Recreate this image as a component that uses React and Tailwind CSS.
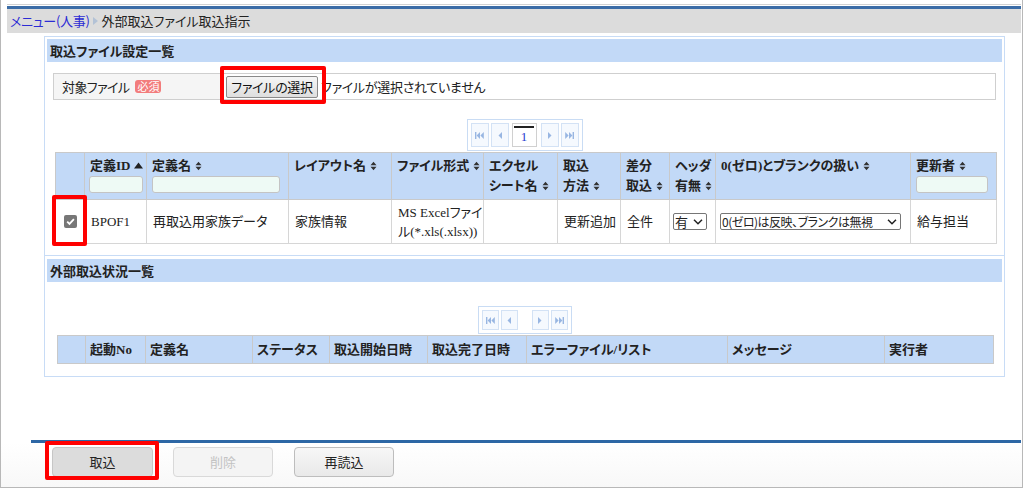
import React from "react";

const Sort = () => (
  <svg width="7" height="10" viewBox="0 0 7 10" className="inline-block ml-[4px] align-[-1px]">
    <path d="M0.5 4.2L3.5 0.8L6.5 4.2Z M0.5 5.8L6.5 5.8L3.5 9.2Z" fill="#333" />
  </svg>
);

const Up = () => (
  <svg width="9" height="7" viewBox="0 0 9 7" className="inline-block ml-[4px] align-[1px]">
    <path d="M0 6.5L4.5 0.5L9 6.5Z" fill="#222" />
  </svg>
);

const C = "#98b6e2";
const First = () => (
  <svg width="9" height="7" viewBox="0 0 9 7">
    <rect x="0" y="0" width="1.4" height="7" fill={C} />
    <path d="M5 0L1.6 3.5L5 7Z M8.8 0L5.4 3.5L8.8 7Z" fill={C} />
  </svg>
);
const Last = () => (
  <svg width="9" height="7" viewBox="0 0 9 7">
    <rect x="7.6" y="0" width="1.4" height="7" fill={C} />
    <path d="M0.2 0L3.6 3.5L0.2 7Z M4 0L7.4 3.5L4 7Z" fill={C} />
  </svg>
);
const Prev = () => (
  <svg width="4" height="7" viewBox="0 0 4 7">
    <path d="M4 0L0.5 3.5L4 7Z" fill={C} />
  </svg>
);
const Next = () => (
  <svg width="4" height="7" viewBox="0 0 4 7">
    <path d="M0 0L3.5 3.5L0 7Z" fill={C} />
  </svg>
);

const Chevron = () => (
  <svg width="10" height="6" viewBox="0 0 10 6" className="shrink-0">
    <path d="M1 0.8L5 4.8L9 0.8" stroke="#222" strokeWidth="1.5" fill="none" />
  </svg>
);

const TH1 = "bg-[#c2d9f7] border border-[#c9c9c9] align-top text-left font-bold pt-[3px] pl-[5px] leading-[20px] h-[47px]";
const TD1 = "border border-[#d6d6d6] align-middle pl-[6px] leading-[19px] h-[44px] bg-white font-normal";
const TH2 = "bg-[#c2d9f7] border border-[#c9c9c9] align-middle text-left font-bold pl-[4px] h-[28px] leading-[20px]";

export default function App() {
  return (
    <div className="relative w-[1023px] h-[488px] overflow-hidden bg-white border-l border-r border-b border-[#b8b8b8] flex flex-col font-['Noto_Sans_CJK_JP',sans-serif] [font-feature-settings:'palt'] text-[13px] text-[#222]">
      <div className="mt-[4px] ml-[6px] mr-[1px] h-px bg-[#d2d2d2]" />
      <div className="mt-px ml-[6px] mr-[1px] h-[3px] bg-[#3b6ca6]" />
      <div className="ml-[6px] mr-[1px] h-[24px] bg-[#dcdcdc] flex items-center pl-[3px] leading-[24px]">
        <span className="text-[#2c2cd4] tracking-[-0.3px]">メニュー(人事)</span>
        <svg width="5" height="8" viewBox="0 0 5 8" className="ml-[3px] mr-[4px]">
          <path d="M0 0L5 4L0 8Z" fill="#b3c2d6" />
        </svg>
        <span>外部取込ファイル取込指示</span>
      </div>

      <div className="mt-[3px] ml-[43px] w-[961px]">
        {/* Panel 1 */}
        <div className="border-t border-l border-r border-[#c8dcf6] px-[2px] pt-[2px] pb-[11px]">
          <div className="h-[23px] bg-[#c2d9f7] font-bold pl-[3px] leading-[23px]">取込ファイル設定一覧</div>

          <div className="mt-[11px] mx-[6px] h-[27px] border border-[#cfcfcf] flex items-stretch">
            <div className="w-[168px] bg-[#f5f5f5] flex items-center pl-[8px]">
              <span className="tracking-[-0.6px]">対象ファイル</span>
              <span className="ml-[6px] h-[13px] px-[2px] rounded-[3px] bg-[#f27c7c] text-white text-[11px] leading-[13px]">必須</span>
            </div>
            <div className="flex-1 bg-white flex items-center pl-[4px]">
              <div className="w-[92px] h-[22px] border border-[#8a8a8a] rounded-[2px] bg-linear-to-b from-[#f6f6f6] to-[#dedede] flex items-center justify-center text-[#111] leading-[20px] tracking-[-0.3px]">
                ファイルの選択
              </div>
              <span className="ml-[3px] tracking-[-0.3px]">ファイルが選択されていません</span>
            </div>
          </div>

          <div className="mt-[19px] flex justify-center">
            <div className="flex items-center border border-[#c9dcf4] p-[3px] bg-white">
              <div className="w-[18px] h-[24px] border border-[#d3e2f5] bg-[#f5f9fe] flex items-center justify-center"><First /></div>
              <div className="ml-[2px] w-[18px] h-[24px] border border-[#d3e2f5] bg-[#f5f9fe] flex items-center justify-center"><Prev /></div>
              <div className="ml-[3px] w-[25px] h-[24px] border border-[#d0d0d0] bg-white flex flex-col items-center">
                <div className="mt-[2px] w-[20px] h-[2px] bg-[#222]" />
                <div className="font-['Liberation_Serif',serif] text-[#2a3bd0] leading-[17px]">1</div>
              </div>
              <div className="ml-[4px] w-[18px] h-[24px] border border-[#d3e2f5] bg-[#f5f9fe] flex items-center justify-center"><Next /></div>
              <div className="ml-[2px] w-[18px] h-[24px] border border-[#d3e2f5] bg-[#f5f9fe] flex items-center justify-center"><Last /></div>
            </div>
          </div>

          <table className="mt-[1px] ml-[8px] w-[941px] table-fixed border-collapse font-['Liberation_Serif','Noto_Sans_CJK_JP',serif]">
            <colgroup>
              <col className="w-[29px]" />
              <col className="w-[62px]" />
              <col className="w-[142px]" />
              <col className="w-[103px]" />
              <col className="w-[92px]" />
              <col className="w-[74px]" />
              <col className="w-[63px]" />
              <col className="w-[49px]" />
              <col className="w-[46px]" />
              <col className="w-[195px]" />
              <col className="w-[86px]" />
            </colgroup>
            <thead>
              <tr>
                <th className={TH1}></th>
                <th className={TH1}>
                  <div>定義ID<Up /></div>
                  <div className="-ml-px w-[54px] h-[17px] border border-[#c4c4c4] rounded-[3px] bg-[#eefaf5]" />
                </th>
                <th className={TH1}>
                  <div>定義名<Sort /></div>
                  <div className="w-[128px] h-[17px] border border-[#c4c4c4] rounded-[3px] bg-[#eefaf5]" />
                </th>
                <th className={TH1}>レイアウト名<Sort /></th>
                <th className={TH1}>ファイル形式<Sort /></th>
                <th className={TH1}>エクセル<br />シート名<Sort /></th>
                <th className={TH1}>取込<br />方法<Sort /></th>
                <th className={TH1}>差分<br />取込<Sort /></th>
                <th className={TH1}>ヘッダ<br />有無<Sort /></th>
                <th className={TH1}>0(ゼロ)とブランクの扱い<Sort /></th>
                <th className={TH1}>
                  <div>更新者<Sort /></div>
                  <div className="w-[72px] h-[17px] border border-[#c4c4c4] rounded-[3px] bg-[#eefaf5]" />
                </th>
              </tr>
            </thead>
            <tbody>
              <tr>
                <td className="border border-[#d6d6d6] align-middle h-[44px] bg-white">
                  <div className="mx-auto w-[13px] h-[13px] rounded-[2px] bg-[#777777] flex items-center justify-center">
                    <svg width="11" height="11" viewBox="0 0 11 11">
                      <path d="M2.2 5.6L4.5 7.9L8.9 3.2" stroke="#fff" strokeWidth="1.8" fill="none" />
                    </svg>
                  </div>
                </td>
                <td className={TD1 + " pl-[4px]"}>BPOF1</td>
                <td className={TD1}>再取込用家族データ</td>
                <td className={TD1}>家族情報</td>
                <td className={TD1}>MS Excelファイル(*.xls(.xlsx))</td>
                <td className={TD1}></td>
                <td className={TD1}>更新追加</td>
                <td className={TD1}>全件</td>
                <td className="border border-[#d6d6d6] align-middle h-[44px] bg-white pl-[3px]">
                  <div className="w-[34px] h-[17px] border border-[#767676] rounded-[2px] bg-white flex items-center justify-between pl-[1px] pr-[3px] leading-[15px] font-['Noto_Sans_CJK_JP',sans-serif]">
                    <span>有</span>
                    <Chevron />
                  </div>
                </td>
                <td className="border border-[#d6d6d6] align-middle h-[44px] bg-white pl-[4px]">
                  <div className="w-[181px] h-[17px] border border-[#767676] rounded-[2px] bg-white flex items-center justify-between pl-[1px] pr-[3px] leading-[15px] font-['Noto_Sans_CJK_JP',sans-serif] text-[12px] tracking-[-0.5px] whitespace-nowrap overflow-hidden">
                    <span>0(ゼロ)は反映、ブランクは無視</span>
                    <Chevron />
                  </div>
                </td>
                <td className={TD1}>給与担当</td>
              </tr>
            </tbody>
          </table>
        </div>

        {/* Panel 2 */}
        <div className="border border-[#c8dcf6] px-[2px] pt-[3px] pb-[12px]">
          <div className="h-[23px] bg-[#c2d9f7] font-bold pl-[3px] leading-[23px]">外部取込状況一覧</div>

          <div className="mt-[24px] flex justify-center">
            <div className="flex items-center border border-[#c9dcf4] p-[3px] bg-white">
              <div className="w-[17px] h-[20px] border border-[#d3e2f5] bg-[#f5f9fe] flex items-center justify-center"><First /></div>
              <div className="ml-[2px] w-[17px] h-[20px] border border-[#d3e2f5] bg-[#f5f9fe] flex items-center justify-center"><Prev /></div>
              <div className="ml-[6px] w-[6px] h-[20px]" />
              <div className="ml-[2px] w-[17px] h-[20px] border border-[#d3e2f5] bg-[#f5f9fe] flex items-center justify-center"><Next /></div>
              <div className="ml-[2px] w-[17px] h-[20px] border border-[#d3e2f5] bg-[#f5f9fe] flex items-center justify-center"><Last /></div>
            </div>
          </div>

          <table className="mt-[1px] ml-[10px] w-[936px] table-fixed border-collapse font-['Liberation_Serif','Noto_Sans_CJK_JP',serif]">
            <colgroup>
              <col className="w-[28px]" />
              <col className="w-[60px]" />
              <col className="w-[107px]" />
              <col className="w-[77px]" />
              <col className="w-[98px]" />
              <col className="w-[99px]" />
              <col className="w-[201px]" />
              <col className="w-[157px]" />
              <col className="w-[109px]" />
            </colgroup>
            <thead>
              <tr>
                <th className={TH2}></th>
                <th className={TH2}>起動No</th>
                <th className={TH2}>定義名</th>
                <th className={TH2}>ステータス</th>
                <th className={TH2}>取込開始日時</th>
                <th className={TH2}>取込完了日時</th>
                <th className={TH2}>エラーファイル/リスト</th>
                <th className={TH2}>メッセージ</th>
                <th className={TH2}>実行者</th>
              </tr>
            </thead>
          </table>
        </div>
      </div>

      <div className="mt-[63px] ml-[30px] mr-[1px] h-[3px] bg-[#2d67a5]" />
      <div className="flex-1 flex items-start pl-[51px] pt-[4px] bg-linear-to-b from-white to-[#f8f8f8]">
        <div className="w-[101px] h-[30px] rounded-[4px] border border-[#c6c6c6] bg-[#dcdcdc] flex items-center justify-center">取込</div>
        <div className="ml-[20px] w-[100px] h-[30px] rounded-[4px] border border-[#d9d9d9] bg-[#f4f4f4] text-[#c3c3c3] flex items-center justify-center">削除</div>
        <div className="ml-[21px] w-[100px] h-[30px] rounded-[4px] border border-[#bdbdbd] bg-linear-to-b from-[#f7f7f7] to-[#e9e9e9] flex items-center justify-center">再読込</div>
      </div>

      {/* red highlight overlays */}
      <div className="absolute left-[219px] top-[66px] w-[106px] h-[38px] border-[4px] border-[#ff0000] rounded-[2px]" />
      <div className="absolute left-[51px] top-[195px] w-[35px] h-[51px] border-[4px] border-[#ff0000] rounded-[2px]" />
      <div className="absolute left-[44px] top-[441px] w-[114px] h-[39px] border-[4px] border-[#ff0000] rounded-[2px]" />
    </div>
  );
}
